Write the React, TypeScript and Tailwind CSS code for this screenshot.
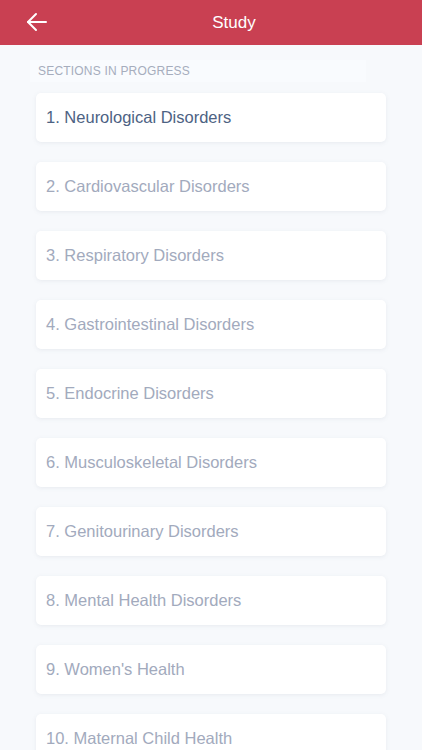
import React from 'react';

const SECTIONS = [
  'Neurological Disorders',
  'Cardiovascular Disorders',
  'Respiratory Disorders',
  'Gastrointestinal Disorders',
  'Endocrine Disorders',
  'Musculoskeletal Disorders',
  'Genitourinary Disorders',
  'Mental Health Disorders',
  "Women's Health",
  'Maternal Child Health',
];

export default function App() {
  return (
    <div
      className="h-[750px] w-[422px] overflow-hidden bg-[#f7f9fc]"
      style={{ fontFamily: '"Helvetica Neue", "Liberation Sans", Arial, sans-serif' }}
    >
      {/* Header */}
      <div className="relative flex h-[45px] items-center justify-center bg-[#c94052]">
        <button className="absolute left-[26px] top-[12px] text-white">
          <svg width="22" height="20" viewBox="0 0 22 20" fill="none" stroke="currentColor" strokeWidth="2" strokeLinecap="round" strokeLinejoin="round">
            <path d="M20 10H2" />
            <path d="M10 2L2 10l8 8" />
          </svg>
        </button>
        <h1 className="ml-[46px] text-[17px] text-white">Study</h1>
      </div>

      {/* Sections */}
      <div className="px-[36px] pt-[15px]">
        <div className="mb-[11px] mr-[20px] -ml-[6px] bg-[#f9fbfe] px-[8px] py-[2px] text-[12px] tracking-[0.2px] text-[#a6adbd]">
          SECTIONS IN PROGRESS
        </div>
        <div className="flex flex-col gap-[20px]">
          {SECTIONS.map((name, i) => (
            <div
              key={name}
              className="flex h-[49px] items-center rounded-[5px] bg-white px-[10px] shadow-[0_1px_4px_rgba(120,130,150,0.12)]"
            >
              <span className={`text-[16.5px] ${i === 0 ? 'text-[#4d6283]' : 'text-[#a2aabd]'}`}>
                {i + 1}. {name}
              </span>
            </div>
          ))}
        </div>
      </div>
    </div>
  );
}
